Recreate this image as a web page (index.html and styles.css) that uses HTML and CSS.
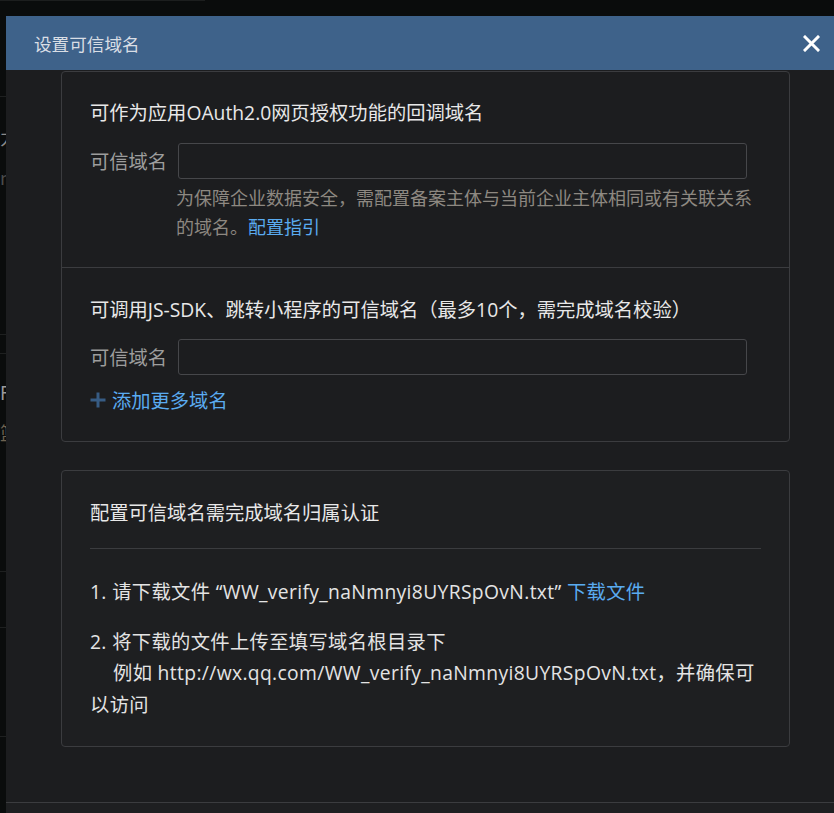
FILE: index.html
```html
<!DOCTYPE html>
<html lang="zh-CN">
<head>
    <meta charset="UTF-8">
    <meta name="viewport" content="width=device-width, initial-scale=1.0">
    <title>设置可信域名</title>
    <link rel="stylesheet" href="styles.css">
</head>
<body>
    <!-- page behind the dialog, mostly covered -->
    <div class="page">
        <div class="page-topline"></div>
        <div class="page-row page-row-first"></div>
        <div class="page-text page-text-a">力</div>
        <div class="page-text page-text-b">n</div>
        <div class="page-row page-row-tall"></div>
        <div class="page-row page-row-thin"></div>
        <div class="page-text page-text-c">Fl</div>
        <div class="page-text page-text-d">篮</div>
        <div class="page-row page-row-mid"></div>
        <div class="page-row page-row-short"></div>
        <div class="page-row page-row-last"></div>
    </div>

    <div class="dialog">
        <div class="dialog-header">
            <h3>设置可信域名</h3>
            <button class="close-btn" aria-label="关闭">
                <svg width="17" height="17" viewBox="0 0 17 17">
                    <path d="M2 2 L15 15 M15 2 L2 15" stroke="#fff" stroke-width="3" stroke-linecap="square" fill="none"/>
                </svg>
            </button>
        </div>

        <div class="dialog-body">
            <div class="card">
                <div class="card-section section-oauth">
                    <div class="section-title">可作为应用OAuth2.0网页授权功能的回调域名</div>
                    <div class="form-row">
                        <label class="form-label">可信域名</label>
                        <input class="form-input" type="text">
                    </div>
                    <div class="form-help">为保障企业数据安全，需配置备案主体与当前企业主体相同或有关联关系的域名。<a href="#" class="link">配置指引</a></div>
                </div>
                <div class="card-section section-jssdk">
                    <div class="section-title">可调用JS-SDK、跳转小程序的可信域名（最多10个，需完成域名校验）</div>
                    <div class="form-row">
                        <label class="form-label">可信域名</label>
                        <input class="form-input" type="text">
                    </div>
                    <a href="#" class="add-more">
                        <svg width="16" height="16" viewBox="0 0 16 16">
                            <path d="M8 0.5 V15.5 M0.5 8 H15.5" stroke="#375c84" stroke-width="3" fill="none"/>
                        </svg>
                        添加更多域名
                    </a>
                </div>
            </div>

            <div class="card card-verify">
                <div class="verify-title">配置可信域名需完成域名归属认证</div>
                <div class="verify-divider"></div>
                <div class="verify-step">1. 请下载文件 “WW_verify_naNmnyi8UYRSpOvN.txt” <a href="#" class="link">下载文件</a></div>
                <div class="verify-step">2. 将下载的文件上传至填写域名根目录下<br><span class="indent"></span>例如 http://wx.qq.com/WW_verify_naNmnyi8UYRSpOvN.txt，并确保可以访问</div>
            </div>
        </div>

        <div class="dialog-footer"></div>
    </div>
</body>
</html>
```

FILE: styles.css
```css
* {
    margin: 0;
    padding: 0;
    box-sizing: border-box;
}

body {
    font-family: "Open Sans", "Noto Sans CJK SC", sans-serif;
    font-size: 19.3px;
    background: #0a0c0c;
    color: #e2e2e2;
    overflow: hidden;
    height: 813px;
}

/* background page */
.page {
    width: 210px;
}

.page-topline {
    width: 205px;
    height: 1px;
    background: #1c1e1e;
}

.page-row {
    border-bottom: 1px solid #1e2020;
}

.page-row-first { height: 96px; }
.page-row-tall { height: 158px; }
.page-row-thin { height: 19px; }
.page-row-mid { height: 140px; }
.page-row-short { height: 56px; }
.page-row-last { height: 109px; }

.page-text {
    height: 0;
    line-height: 0;
    font-family: "Noto Sans CJK SC", sans-serif;
    font-size: 18px;
}

.page-text-a { margin-top: 40px; color: #8a8a8a; }
.page-text-b { margin-top: 40px; color: #4c4c4c; }
.page-text-c { margin-top: 38px; color: #9a9a9a; }
.page-text-d { margin-top: 40px; color: #6e6250; }

/* dialog */
.dialog {
    position: fixed;
    top: 16px;
    left: 6px;
    width: 828px;
    background: #1c1d1f;
}

.dialog-header {
    height: 54px;
    background: #3e628a;
    display: flex;
    align-items: center;
    justify-content: space-between;
    padding: 0 14px 0 28px;
}

.dialog-header h3 {
    font-family: "Noto Sans CJK SC", sans-serif;
    font-size: 17.6px;
    font-weight: normal;
    color: #d9dee5;
}

.close-btn {
    background: none;
    border: none;
    width: 17px;
    height: 17px;
    cursor: pointer;
    display: flex;
}

.dialog-body {
    height: 732px;
    overflow: hidden;
    padding: 1px 44px 0 55px;
}

.card {
    border: 1px solid #3b3c3f;
    border-radius: 4px;
    background: #1c1d1f;
}

.card-section {
    padding: 0 28px;
}

.section-oauth {
    padding-top: 27px;
    padding-bottom: 26px;
    border-bottom: 1px solid #3b3c3f;
}

.section-jssdk {
    padding-top: 28px;
    padding-bottom: 27px;
}

.section-title {
    line-height: 28px;
    color: #e8e8e8;
}

.form-row {
    display: flex;
    align-items: center;
    margin-top: 16px;
}

.section-jssdk .form-row {
    margin-top: 15px;
}

.form-label {
    width: 88px;
    color: #9d9d9d;
    font-family: "Noto Sans CJK SC", sans-serif;
}

.form-input {
    width: 569px;
    height: 36px;
    border: 1px solid #46474a;
    border-radius: 3px;
    background: #1c1d1f;
    color: #ddd;
    font-size: 16px;
    padding: 0 10px;
    outline: none;
}

.form-help {
    margin: 4px 0 0 86px;
    width: 582px;
    font-family: "Noto Sans CJK SC", sans-serif;
    font-size: 18px;
    line-height: 29px;
    color: #8d8881;
}

.link {
    color: #5aabf0;
    text-decoration: none;
}

.add-more {
    display: inline-flex;
    align-items: center;
    gap: 6px;
    margin-top: 11px;
    line-height: 28px;
    color: #5aabf0;
    text-decoration: none;
    font-family: "Noto Sans CJK SC", sans-serif;
}

.card-verify {
    margin-top: 28px;
    padding: 28px 28px 26px;
    background: #1e1f21;
}

.verify-title {
    line-height: 28px;
    color: #e8e8e8;
}

.verify-divider {
    height: 1px;
    background: #3b3c3f;
    margin: 21px 0 27px;
}

.verify-step {
    line-height: 31.5px;
    letter-spacing: 0.35px;
    color: #e4e4e4;
}

.verify-step + .verify-step {
    margin-top: 18px;
}

.indent {
    display: inline-block;
    width: 23px;
}

.dialog-footer {
    height: 60px;
    border-top: 1px solid #3b3c3f;
    background: #1e1f21;
}
```
